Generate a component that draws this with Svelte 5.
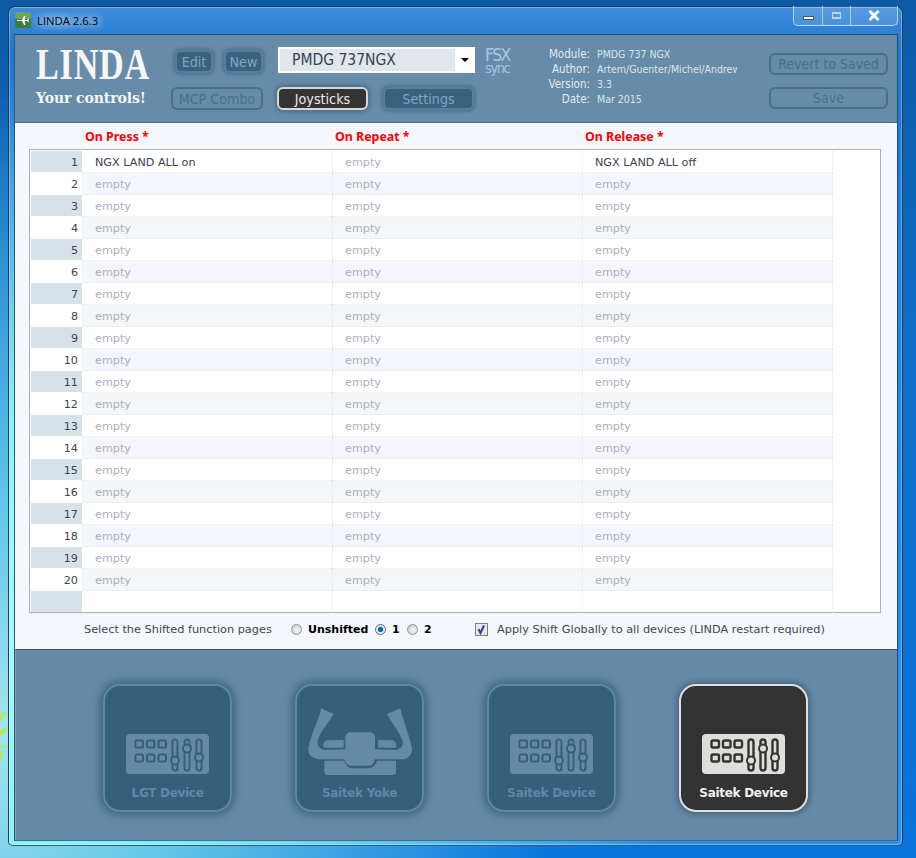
<script>
	const rows = Array.from({ length: 20 }, (_, i) => ({
		n: i + 1,
		press: i === 0 ? 'NGX LAND ALL on' : 'empty',
		repeat: 'empty',
		release: i === 0 ? 'NGX LAND ALL off' : 'empty'
	}));
	const meta = [
		['Module:', 'PMDG 737 NGX'],
		['Author:', 'Artem/Guenter/Michel/Andrew'],
		['Version:', '3.3'],
		['Date:', 'Mar 2015']
	];
	const devices = [
		{ label: 'LGT Device', kind: 'panel' },
		{ label: 'Saitek Yoke', kind: 'yoke' },
		{ label: 'Saitek Device', kind: 'panel' },
		{ label: 'Saitek Device', kind: 'panel', active: true }
	];
</script>

<div class="desktop">
	<svg class="leaf" width="8" height="60" viewBox="0 0 8 60">
		<path d="M0 8 L5 5 L7 7 L0 16 Z M0 24 L8 20 L5 27 L0 31 Z M0 40 L7 38 L7 40 L0 43 Z M0 46 L3 45 L2 54 L0 54 Z" fill="#b4e86a" />
	</svg>
	<div class="window">
		<div class="titlebar">
			<svg class="appicon" width="16" height="16" viewBox="0 0 16 16">
				<rect width="16" height="16" rx="2" fill="#3f7a3a" />
				<rect width="16" height="7" rx="2" fill="#6da35f" />
				<path d="M2 8 L7 8 L9 4 L10.5 4 L9.5 8 L12 8 L13 6.5 L14 6.5 L13.5 8.5 L14 10 L13 10 L12 9 L9.5 9 L10.5 13 L9 13 L7 9 L2 9 Z" fill="#fff" />
			</svg>
			<span class="title">LINDA 2.6.3</span>
			<div class="caption">
				<div class="cap min"><i></i></div>
				<div class="cap max"><i></i></div>
				<div class="cap close">
					<svg width="12" height="11" viewBox="0 0 12 11">
						<path d="M1.5 1 L10.5 10 M10.5 1 L1.5 10" stroke="#fff" stroke-width="3" />
					</svg>
				</div>
			</div>
		</div>

		<div class="client">
			<header class="header">
				<div class="logo">
					<div class="logo-main">LINDA</div>
					<div class="logo-sub">Your controls!</div>
				</div>
				<div class="controls">
					<div class="controls-row top">
						<button class="btn small">Edit</button>
						<button class="btn small">New</button>
						<div class="select">
							<span class="select-value">PMDG 737NGX</span>
							<span class="select-arrow"></span>
						</div>
						<div class="fsx"><b>FSX</b><span>sync</span></div>
					</div>
					<div class="controls-row bottom">
						<button class="btn mcp outline">MCP Combo</button>
						<button class="btn tab active">Joysticks</button>
						<button class="btn tab">Settings</button>
					</div>
				</div>
				<dl class="meta">
					{#each meta as [k, v]}
						<dt>{k}</dt>
						<dd>{v}</dd>
					{/each}
				</dl>
				<div class="actions">
					<button class="btn outline wide">Revert to Saved</button>
					<button class="btn outline wide">Save</button>
				</div>
			</header>

			<section class="main">
				<div class="cols">
					<span>On Press *</span>
					<span>On Repeat *</span>
					<span>On Release *</span>
				</div>
				<div class="table">
					{#each rows as r}
						<div class="row" class:alt={r.n % 2 === 0}>
							<div class="num">{r.n}</div>
							<div class="cell" class:set={r.press !== 'empty'}>{r.press}</div>
							<div class="cell" class:set={r.repeat !== 'empty'}>{r.repeat}</div>
							<div class="cell" class:set={r.release !== 'empty'}>{r.release}</div>
						</div>
					{/each}
					<div class="row last">
						<div class="num"></div>
						<div class="cell"></div>
						<div class="cell"></div>
						<div class="cell"></div>
					</div>
				</div>
				<div class="shift">
					<span class="shift-label">Select the Shifted function pages</span>
					<span class="radio"></span><b class="u">Unshifted</b>
					<span class="radio on"></span><b class="one">1</b>
					<span class="radio"></span><b class="two">2</b>
					<span class="check">
						<svg width="11" height="11" viewBox="0 0 11 11">
							<path d="M2.5 5 L4.5 9 L8 1.5" fill="none" stroke="#2b3f9e" stroke-width="2" />
						</svg>
					</span>
					<span class="apply">Apply Shift Globally to all devices (LINDA restart required)</span>
				</div>
			</section>

			<section class="devices">
				{#each devices as d}
					<div class="device" class:active={d.active}>
						{#if d.kind === 'panel'}
							<svg class="panel-icon" width="83" height="40" viewBox="0 0 83 40">
								<rect class="ic" width="83" height="40" rx="4" />
								{#each [0, 1] as y}
									{#each [0, 1, 2] as x}
										<rect class="hole" x={9.5 + x * 11.5} y={6.5 + y * 14} width="7.5" height="7" rx="1.5" />
									{/each}
								{/each}
								<rect class="hole" x="46.5" y="5.5" width="5" height="31" rx="2.5" />
								<circle class="knob" cx="49" cy="26.5" r="4" />
								<rect class="hole" x="58.5" y="5.5" width="5" height="31" rx="2.5" />
								<circle class="knob" cx="61" cy="14.5" r="4" />
								<rect class="hole" x="70.5" y="5.5" width="5" height="31" rx="2.5" />
								<circle class="knob" cx="73" cy="23.5" r="4" />
							</svg>
						{:else}
							<svg class="yoke-icon" width="124" height="72" viewBox="-9 15 372 216">
								<path class="ic" d="M60 25 L98 42 C85 65 60 90 50 122 C48 135 55 148 72 150 L133 148 L133 112 C133 103 141 97 150 97 L205 97 C214 97 222 103 222 112 L222 148 L285 150 C300 148 308 135 305 122 C295 95 270 65 258 42 L298 25 C305 60 325 105 333 145 C335 165 320 178 300 178 L222 178 L220 182 C218 192 212 197 205 197 L150 197 C143 197 135 192 133 182 L130 178 L55 178 C30 176 20 160 22 145 C30 100 55 60 60 25 Z" />
								<path class="ic" d="M78 121 L128 120 L128 143 L72 143 C66 143 66 135 68 130 C70 125 73 122 78 121 Z" />
								<path class="ic" d="M232 120 L275 121 C282 122 287 132 285 143 L232 143 Z" />
								<path class="ic" d="M70 182 L130 182 C133 194 143 205 155 205 L203 205 C215 205 225 194 228 182 L285 182 L285 215 C285 221 281 225 275 225 L80 225 C74 225 70 221 70 215 Z" />
							</svg>
						{/if}
						<span class="device-label">{d.label}</span>
					</div>
				{/each}
			</section>
		</div>
	</div>
</div>

<style>
	:global(body) {
		margin: 0;
		font-family: 'DejaVu Sans', sans-serif;
	}

	.desktop {
		width: 916px;
		height: 858px;
		overflow: hidden;
		position: relative;
		box-sizing: border-box;
		padding: 6px 13px 12px 8px;
		background:
			radial-gradient(ellipse 560px 640px at 0% 85%, #a4e4ee 0%, #62c6e8 35%, rgba(60, 160, 230, 0) 100%),
			linear-gradient(180deg, #0c5aa6 0%, #0f6ec8 40%, #0a74dc 100%);
	}

	.leaf {
		position: absolute;
		left: 0;
		top: 706px;
	}

	.window {
		position: relative;
		height: 100%;
		box-sizing: border-box;
		padding: 0 4px 6px 5px;
		border: 1px solid #1c3f5e;
		border-bottom-color: #2c5f78;
		border-radius: 7px 7px 5px 5px;
		box-shadow: inset 0 0 0 1px rgba(255, 255, 255, 0.3);
		background:
			radial-gradient(ellipse 700px 560px at 0% 75%, #a6fbff 0%, #8af0ff 40%, rgba(60, 170, 245, 0) 100%),
			linear-gradient(180deg, #3f8ddb 0%, #2178cf 5%, #2a8ae6 50%, #2a92f0 100%);
	}

	.titlebar {
		height: 27px;
		display: flex;
		align-items: center;
		position: relative;
		padding-left: 1px;
		padding-bottom: 1px;
		box-sizing: border-box;
	}

	.title {
		margin-left: 6px;
		font: 11.3px 'Open Sans', sans-serif;
		color: #000;
		text-shadow: 0 0 8px #fff, 0 0 8px #fff;
	}

	.caption {
		position: absolute;
		top: -1px;
		right: 0;
		display: flex;
		height: 19px;
		border: 1px solid #b9d5ee;
		border-top: 0;
		border-radius: 0 0 5px 5px;
		background: rgba(255, 255, 255, 0.12);
	}

	.cap {
		display: flex;
		align-items: center;
		justify-content: center;
		height: 100%;
	}

	.min {
		width: 28px;
		border-right: 1px solid #a9cbe8;
	}
	.min i {
		width: 11px;
		height: 4px;
		margin-top: 5px;
		background: #fff;
		border: 1px solid #456;
		box-sizing: border-box;
	}
	.max {
		width: 27px;
		border-right: 1px solid #a9cbe8;
	}
	.max i {
		width: 9px;
		height: 7px;
		border: 2px solid #c0d4ea;
		box-sizing: border-box;
		border-width: 2px 1px;
	}
	.close {
		width: 46px;
	}

	.client {
		height: 805px;
		width: 882px;
		display: flex;
		flex-direction: column;
		border: 1px solid #1d4c6c;
		border-left-color: #2a5876;
		border-bottom-color: #35708a;
		background: #f4f7fb;
	}

	.header {
		height: 88px;
		flex: none;
		display: flex;
		box-sizing: border-box;
		background: #678ca9;
		border-bottom: 1px solid #456c89;
	}

	.logo {
		width: 155px;
		box-sizing: border-box;
		padding: 8px 0 0 21px;
		color: #f6f6f4;
		flex: none;
		overflow: hidden;
	}
	.logo-main {
		font-family: 'Liberation Serif', serif;
		font-size: 45px;
		line-height: 42px;
		font-weight: bold;
		letter-spacing: 1px;
		transform: scaleX(0.76);
		transform-origin: left center;
		white-space: nowrap;
	}
	.logo-sub {
		font-family: 'DejaVu Serif', serif;
		font-size: 14px;
		line-height: 18px;
		margin-top: 4px;
		font-weight: bold;
		white-space: nowrap;
		letter-spacing: -0.1px;
	}

	.controls {
		width: 350px;
		flex: none;
		padding-top: 11px;
		box-sizing: border-box;
		padding-left: 1px;
	}
	.controls-row {
		display: flex;
	}
	.top {
		height: 29px;
		padding-top: 4px;
		padding-left: 4px;
		box-sizing: border-box;
		align-items: flex-start;
	}
	.bottom {
		margin-top: 12px;
	}

	.btn {
		font: 14.2px 'DejaVu Sans Condensed', 'DejaVu Sans', sans-serif;
		font-stretch: condensed;
		box-sizing: border-box;
		height: 23px;
		padding: 0;
		border-radius: 6px;
		color: #7ea4c2;
		background: #3a627f;
		border: 2px solid #52809f;
		box-shadow: 0 0 3px 2px #537590;
		white-space: nowrap;
	}
	.small {
		width: 38px;
		margin-right: 11px;
	}
	.small:nth-child(2) {
		width: 39px;
		margin-right: 15px;
	}
	.mcp {
		width: 92px;
		margin-right: 14px;
	}
	.tab {
		width: 91px;
		margin-right: 15px;
	}
	.outline {
		background: transparent;
		color: #44718f;
		border: 2px solid #44718f;
		box-shadow: none;
	}
	.active {
		background: #333;
		color: #ecebe5;
		border-color: #d8d6cf;
		box-shadow: 0 0 4px 2px #4d6e88;
	}

	.select {
		width: 197px;
		height: 26px;
		margin-top: -3px;
		box-sizing: border-box;
		background: #fff;
		border: 2px solid #fff;
		display: flex;
		align-items: center;
	}
	.select-value {
		flex: 1;
		height: 100%;
		background: #e0e6ec;
		color: #36424f;
		padding-left: 12px;
		font: 15.5px/22px 'DejaVu Sans Condensed', 'DejaVu Sans', sans-serif;
		font-stretch: condensed;
	}
	.select-arrow {
		width: 0;
		height: 0;
		margin: 0 4px 0 6px;
		border: 4px solid transparent;
		border-top: 4px solid #000;
		border-bottom: 0;
	}
	.fsx {
		margin-left: 10px;
		margin-top: -3px;
		display: flex;
		flex-direction: column;
		color: #a6c6e8;
		width: 30px;
		font-family: 'DejaVu Sans Condensed', 'DejaVu Sans', sans-serif;
		font-stretch: condensed;
	}
	.fsx b {
		font-weight: normal;
		font-size: 17.5px;
		line-height: 16px;
		letter-spacing: -1.6px;
	}
	.fsx span {
		font-size: 14.5px;
		line-height: 11px;
		letter-spacing: -1.4px;
	}

	.meta {
		margin: 0;
		padding-top: 12px;
		width: 249px;
		flex: none;
		box-sizing: border-box;
		display: grid;
		grid-template-columns: 70px 140px;
		grid-auto-rows: 15px;
		column-gap: 7px;
		font-family: 'DejaVu Sans Condensed', 'DejaVu Sans', sans-serif;
		font-stretch: condensed;
		font-size: 11.5px;
		line-height: 15px;
		color: #e4e9ee;
	}
	.meta dt {
		text-align: right;
	}
	.meta dd {
		margin: 0;
		font-size: 10.5px;
		overflow: hidden;
		white-space: nowrap;
		color: #dbe3ea;
	}

	.actions {
		display: flex;
		flex-direction: column;
		gap: 12px;
		padding-top: 18px;
	}
	.wide {
		width: 119px;
		height: 22px;
		font-size: 14px;
	}

	.main {
		flex: 1;
		padding: 0 16px 0 14px;
		min-height: 0;
		display: flex;
		flex-direction: column;
	}
	.cols {
		display: grid;
		grid-template-columns: repeat(3, 250px);
		padding-left: 56px;
		height: 26px;
		line-height: 28px;
		font-family: 'Noto Sans', sans-serif;
		font-size: 12.4px;
		font-weight: bold;
		color: #f00;
	}
	.table {
		height: 464px;
		flex: none;
		box-sizing: border-box;
		border: 1px solid #acb0b8;
		padding: 1px;
		background: #fff;
		font-size: 11.2px;
	}
	.row {
		display: flex;
		height: 22px;
		line-height: 23px;
	}
	.row.alt .cell {
		background: #f3f6fa;
	}
	.num {
		width: 51px;
		box-sizing: border-box;
		padding-right: 4px;
		text-align: right;
		background: #d7e1e8;
		color: #3c4650;
		margin-bottom: 1px;
		line-height: 23px;
	}
	.alt .num {
		background: transparent;
	}
	.cell {
		width: 250px;
		box-sizing: border-box;
		padding-left: 13px;
		color: #aab0ba;
		border-bottom: 1px dotted #e4e7ea;
	}
	.cell + .cell {
		padding-left: 12px;
		border-left: 1px dotted #e4e7ea;
	}
	.cell:last-child {
		width: 251px;
		border-right: 1px dotted #e4e7ea;
	}
	.cell.set {
		color: #3a4350;
	}
	.last .cell {
		border-bottom: 0;
	}
	.shift {
		display: flex;
		align-items: center;
		height: 32px;
		padding-left: 55px;
		font-size: 11.3px;
		color: #3e4753;
	}
	.shift b {
		color: #000;
		font-size: 11px;
	}
	.shift-label {
		width: 207px;
		flex: none;
		white-space: nowrap;
	}
	.radio {
		width: 11px;
		height: 11px;
		margin-right: 6px;
		flex: none;
		box-sizing: border-box;
		border-radius: 50%;
		border: 1px solid #8e9296;
		background: radial-gradient(circle at 60% 60%, #f6f6f6, #c4c4c4);
	}
	.radio.on {
		background: radial-gradient(circle, #0b6ea6 0 2.5px, #e8eef4 3px);
		border-color: #5a6a78;
	}
	.u {
		width: 61px;
		margin-right: 6px;
		flex: none;
	}
	.one {
		width: 9px;
		margin-right: 6px;
		flex: none;
	}
	.two {
		width: 9px;
		margin-right: 42px;
		flex: none;
	}
	.check {
		width: 13px;
		height: 13px;
		margin-right: 9px;
		flex: none;
		box-sizing: border-box;
		border: 1px solid #7b7f86;
		background: #e4e6ea;
		display: flex;
		align-items: center;
		justify-content: center;
	}
	.apply {
		white-space: nowrap;
	}

	.devices {
		height: 191px;
		flex: none;
		box-sizing: border-box;
		padding: 34px 0 0 87px;
		display: flex;
		gap: 63px;
		background: #648aa8;
		border-top: 1px solid #4a4f52;
		border-left: 1px solid #9a9a9a;
	}
	.device {
		width: 129px;
		height: 128px;
		flex: none;
		box-sizing: border-box;
		border: 2px solid #5a88ab;
		border-radius: 17px;
		background: #365f7b;
		box-shadow: 0 0 6px 4px #4a6a85;
		display: flex;
		flex-direction: column;
		align-items: center;
		color: #5e88a8;
	}
	.device.active {
		background: #333;
		border-color: #e0dfda;
		color: #f2f2ee;
		box-shadow: 0 0 5px 3px #4a6a85;
	}
	.ic {
		fill: #648aa8;
	}
	.hole {
		fill: none;
		stroke: #365f7b;
		stroke-width: 2;
	}
	.knob {
		fill: #648aa8;
		stroke: #365f7b;
		stroke-width: 2;
	}
	.active .ic,
	.active .knob {
		fill: #dfdeda;
	}
	.active .hole,
	.active .knob {
		stroke: #333;
	}
	.active .hole {
		stroke-width: 2.4;
	}
	.panel-icon {
		margin-top: 48px;
		flex: none;
	}
	.yoke-icon {
		margin-top: 19px;
		flex: none;
	}
	.device-label {
		margin-top: 11px;
		font-size: 12px;
		line-height: 16px;
		font-weight: bold;
		letter-spacing: -0.3px;
	}
	.yoke-icon + .device-label {
		margin-top: 8px;
	}
</style>
